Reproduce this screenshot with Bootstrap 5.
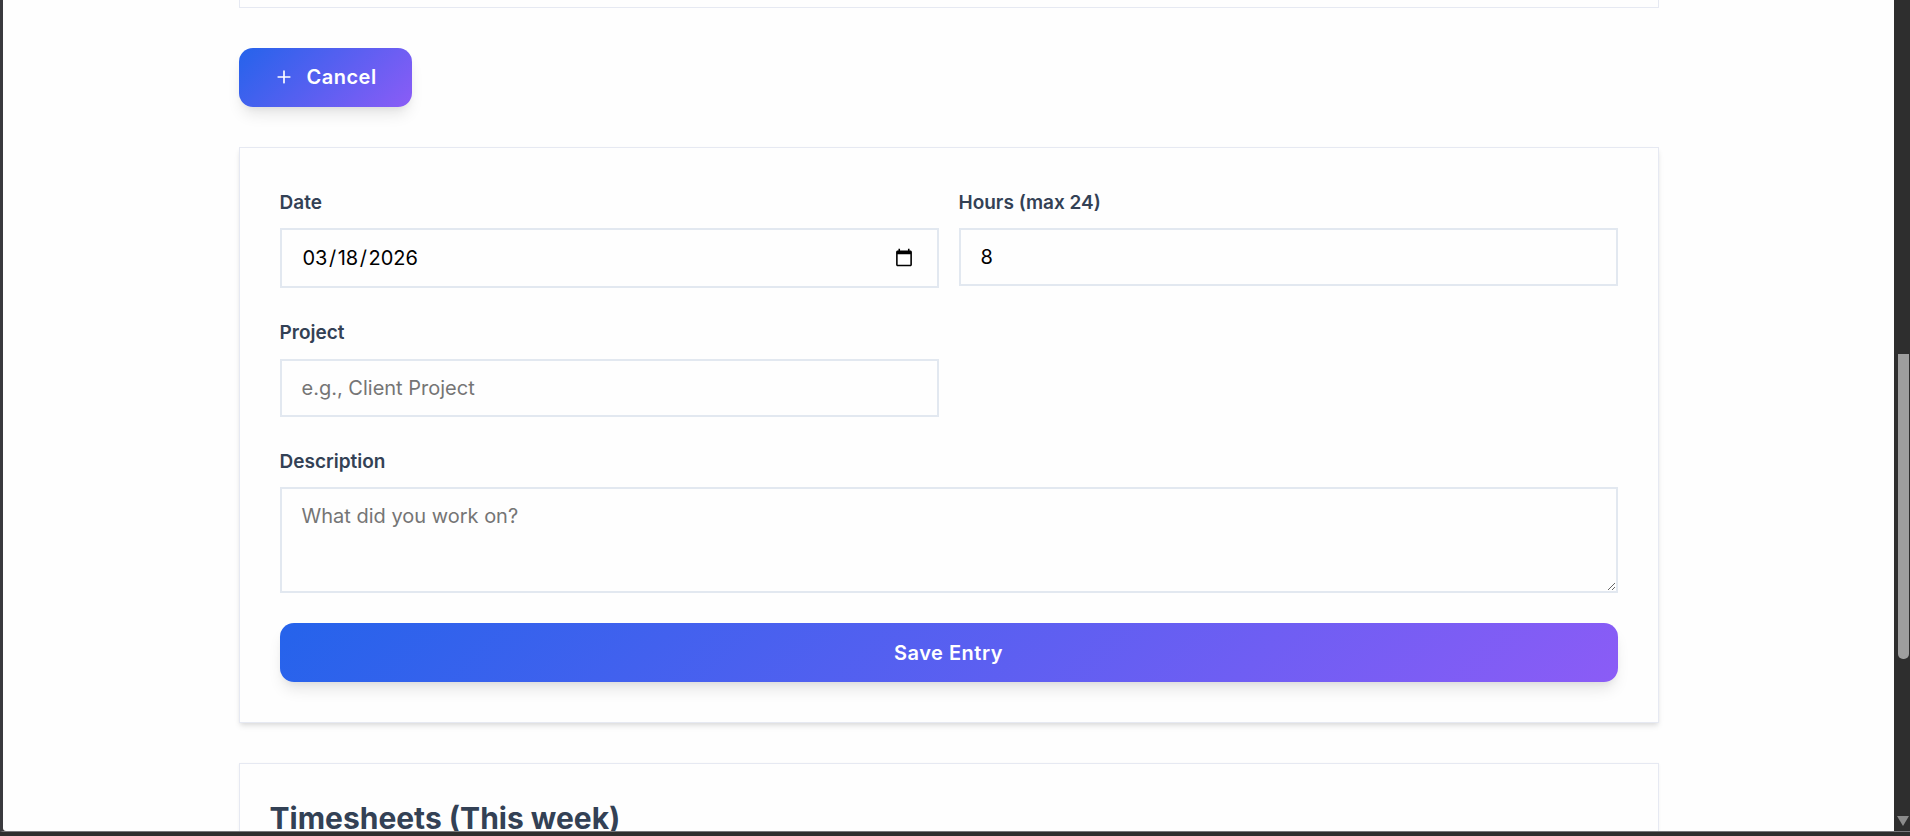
<!DOCTYPE html>
<html lang="en">
  <head>
    <meta charset="UTF-8" />
    <meta name="viewport" content="width=device-width, initial-scale=1" />
    <title>Timesheets</title>
    <link
      href="https://cdn.jsdelivr.net/npm/bootstrap@5.3.0/dist/css/bootstrap.min.css"
      rel="stylesheet"
    />
    <style>
      html,
      body {
        height: 100%;
        overflow: hidden;
      }
      body {
        font-family: "Inter", "Liberation Sans", sans-serif;
        background: #2e2e2e;
        color: #334155;
      }
      .app-window {
        height: 832px;
        border-left: 3px solid #3a3a3e;
        border-bottom: 1px solid #77777b;
      }
      .page-view {
        background: #fefefe;
        overflow: hidden;
        border-bottom-left-radius: 3px;
      }
      .page-wrap {
        width: 1420px;
      }
      .sheet {
        border: 1px solid #e6e9f2;
        border-radius: 0;
        background: #fefefe;
        color: #334155;
      }
      .sheet-cut {
        height: 8px;
        border-top: 0;
      }
      .sheet-form {
        padding: 40px;
        margin-bottom: 40px;
        box-shadow: 0 4px 6px -1px rgba(0, 0, 0, 0.1), 0 2px 4px -1px rgba(0, 0, 0, 0.06);
      }
      .sheet-list {
        padding: 30px;
        box-shadow: 0 1px 3px rgba(15, 23, 42, 0.05);
      }
      .btn-grad {
        background: linear-gradient(135deg, #2563eb, #8b5cf6);
        border: 0;
        border-radius: 14px;
        color: #fff;
        font-weight: 600;
        font-size: 20px;
        letter-spacing: 0.5px;
        height: 59px;
        box-shadow: 0 10px 15px -3px rgba(0, 0, 0, 0.1), 0 4px 6px -2px rgba(0, 0, 0, 0.05);
      }
      .btn-grad:hover {
        color: #fff;
      }
      .btn-toggle {
        width: 173px;
        margin: 40px 0;
        padding: 0 0 2px 35px;
        gap: 13px;
      }
      .form-gap {
        --bs-gutter-x: 20px;
      }
      .field {
        margin-bottom: 30px;
      }
      .field-label {
        font-size: 19px;
        font-weight: 600;
        line-height: 30px;
        margin-bottom: 10px;
        color: #334155;
      }
      .field-label-wide {
        margin-bottom: 11px;
      }
      .field-input {
        border: 2px solid #e2e8f0;
        border-radius: 0;
        padding: 15px 20px;
        font-size: 20px;
        line-height: normal;
        color: #000;
        background-color: #fefefe;
      }
      .field-input::placeholder {
        color: #757575;
      }
      .field-input::-webkit-datetime-edit {
        padding: 1px;
      }
      .field-input::-webkit-datetime-edit-text {
        padding: 0 1.5px;
      }
      .field-input::-webkit-date-and-time-value {
        height: auto;
      }
      .field-input::-webkit-calendar-picker-indicator {
        margin-right: 1px;
      }
      textarea.field-input {
        height: 106px;
        resize: vertical;
      }
      .list-title {
        font-size: 30px;
        font-weight: 700;
        line-height: 48px;
        color: #334155;
      }
      .fake-scroll {
        width: 16px;
        background: #2e2e2e;
      }
      .fake-thumb {
        margin: 354px 1px 0 4px;
        height: 305px;
        background: #9e9e9e;
        border-radius: 0 0 5px 5px;
      }
      .fake-arrow {
        margin: auto 1px 5px 3px;
        width: 0;
        height: 0;
        border-left: 6px solid transparent;
        border-right: 6px solid transparent;
        border-top: 10px solid #8a8a8a;
      }
    </style>
  </head>
  <body>
    <div class="app-window d-flex">
      <main class="page-view flex-grow-1">
        <div class="page-wrap mx-auto">
          <div class="card sheet sheet-cut"></div>

          <button type="button" class="btn btn-grad btn-toggle d-flex align-items-center">
            <svg width="20" height="20" viewBox="0 0 24 24" fill="none" stroke="currentColor" stroke-width="2" stroke-linecap="round">
              <path d="M12 5v14M5 12h14" />
            </svg>
            <span class="text-nowrap">Cancel</span>
          </button>

          <form class="card sheet sheet-form">
            <div class="row form-gap">
              <div class="col-6 field">
                <label class="form-label field-label d-block" for="entryDate">Date</label>
                <input type="date" class="form-control field-input" id="entryDate" value="2026-03-18" />
              </div>
              <div class="col-6 field">
                <label class="form-label field-label d-block" for="entryHours">Hours (max 24)</label>
                <input type="number" class="form-control field-input" id="entryHours" value="8" />
              </div>
            </div>
            <div class="row form-gap">
              <div class="col-6 field">
                <label class="form-label field-label field-label-wide d-block" for="entryProject">Project</label>
                <input type="text" class="form-control field-input" id="entryProject" placeholder="e.g., Client Project" />
              </div>
            </div>
            <div class="field">
              <label class="form-label field-label d-block" for="entryDesc">Description</label>
              <textarea class="form-control field-input" id="entryDesc" placeholder="What did you work on?"></textarea>
            </div>
            <button type="button" class="btn btn-grad w-100">Save Entry</button>
          </form>

          <section class="card sheet sheet-list">
            <h2 class="list-title mb-0">Timesheets (This week)</h2>
          </section>
        </div>
      </main>
      <div class="fake-scroll d-flex flex-column flex-shrink-0">
        <div class="fake-thumb"></div>
        <div class="fake-arrow"></div>
      </div>
    </div>

    <script src="https://cdn.jsdelivr.net/npm/bootstrap@5.3.0/dist/js/bootstrap.bundle.min.js"></script>
  </body>
</html>
